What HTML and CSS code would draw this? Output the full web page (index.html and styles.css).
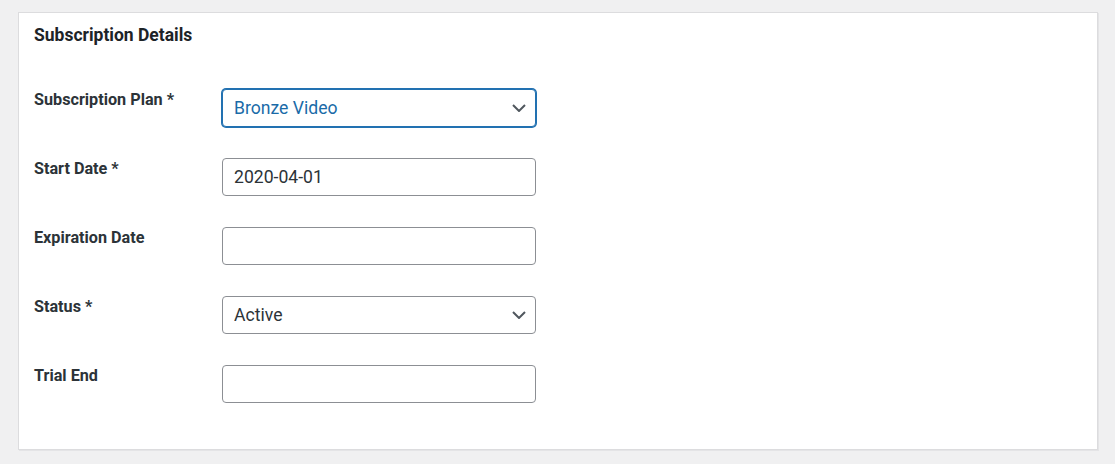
FILE: index.html
```html
<!DOCTYPE html>
<html lang="en">
<head>
<meta charset="utf-8">
<title>Subscription Details</title>
<link rel="stylesheet" href="styles.css">
</head>
<body>
<div class="page">
  <section class="card">
    <h2 class="card-title">Subscription Details</h2>
    <div class="form">
      <label class="label" for="plan">Subscription Plan *</label>
      <div class="select-wrap">
        <select id="plan" class="field select is-focused">
          <option>Bronze Video</option>
        </select>
        <svg class="chevron" width="14" height="8" viewBox="0 0 14 8" aria-hidden="true"><path d="M1 1l6 6 6-6" fill="none" stroke="currentColor" stroke-width="2"/></svg>
      </div>

      <label class="label" for="start">Start Date *</label>
      <input id="start" class="field" type="text" value="2020-04-01">

      <label class="label" for="exp">Expiration Date</label>
      <input id="exp" class="field" type="text" value="">

      <label class="label" for="status">Status *</label>
      <div class="select-wrap">
        <select id="status" class="field select">
          <option>Active</option>
        </select>
        <svg class="chevron" width="14" height="8" viewBox="0 0 14 8" aria-hidden="true"><path d="M1 1l6 6 6-6" fill="none" stroke="currentColor" stroke-width="2"/></svg>
      </div>

      <label class="label" for="trial">Trial End</label>
      <input id="trial" class="field" type="text" value="">
    </div>
  </section>
</div>
</body>
</html>
```

FILE: styles.css
```css
html, body {
  margin: 0;
  padding: 0;
  background: #f0f0f1;
}

body {
  font-family: Roboto, "Liberation Sans", Arial, sans-serif;
  color: #1d2327;
}

.page {
  padding: 12px 17px 15px 18px;
}

.card {
  background: #fff;
  border: 1px solid #dcdcde;
  box-shadow: 1px 1px 0 #e4e4e6;
  padding: 10px 15px 46px 15px;
}

.card-title {
  margin: 0;
  font-size: 17.5px;
  font-weight: 700;
  line-height: 24px;
  color: #1d2327;
}

.form {
  display: grid;
  grid-template-columns: 188px 314px;
  row-gap: 31px;
  margin-top: 42px;
}

.label {
  font-size: 16.2px;
  font-weight: 700;
  line-height: 22px;
  color: #2c3338;
  padding-top: 0;
}

.field {
  box-sizing: border-box;
  width: 314px;
  height: 38px;
  margin: 0;
  padding: 0 11px;
  border: 1px solid #8c8f94;
  border-radius: 4px;
  background: #fff;
  font-family: Roboto, "Liberation Sans", Arial, sans-serif;
  font-size: 17.6px;
  color: #2c3338;
  outline: none;
}

.select-wrap {
  position: relative;
  width: 314px;
  height: 38px;
}

.select {
  -webkit-appearance: none;
  appearance: none;
  padding-right: 32px;
}

.select.is-focused {
  border-color: #2271b1;
  box-shadow: 0 0 0 1px #2271b1;
  color: #1a6ba8;
}

.chevron {
  position: absolute;
  right: 10px;
  top: 15px;
  color: #50575e;
  pointer-events: none;
}
```
